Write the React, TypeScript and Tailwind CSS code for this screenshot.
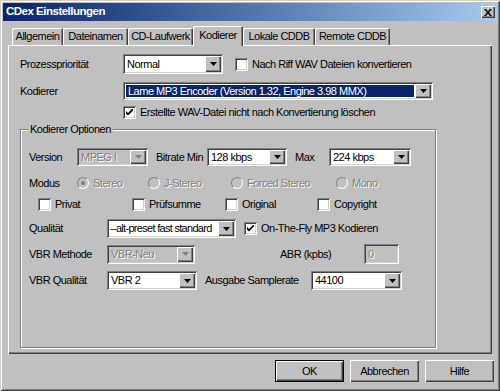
import type { ReactNode } from "react";

/**
 * CDex Einstellungen — Win2000-style settings dialog, "Kodierer" tab.
 */

const sunken =
  "shadow-[inset_1px_1px_0_#808080,inset_-1px_-1px_0_#fff,inset_2px_2px_0_#404040,inset_-2px_-2px_0_#d4d0c8]";
const raised =
  "shadow-[inset_1px_1px_0_#fff,inset_-1px_-1px_0_#404040,inset_-2px_-2px_0_#808080]";
const embossed = "text-[#808080] [text-shadow:1px_1px_0_#fff]";

function Arrow({ disabled }: { disabled?: boolean }) {
  return (
    <svg width="7" height="4" viewBox="0 0 7 4">
      <path d="M0 0h7L3.5 4z" fill={disabled ? "#808080" : "#000"} />
    </svg>
  );
}

function Combo({ value, w, h = 20, disabled, selected, tight }: { value: string; w: string; h?: number; disabled?: boolean; selected?: boolean; tight?: boolean }) {
  return (
    <div className={`${w} ${sunken} flex shrink-0 items-stretch p-[2px] ${disabled ? "bg-[#c0c0c0]" : "bg-white"}`} style={{ height: h }}>
      <div className={`flex min-w-0 flex-1 items-center ${selected ? "p-[1px]" : ""}`}>
        <span
          className={`flex h-full flex-1 items-center overflow-hidden whitespace-nowrap ${tight ? "pl-[1px] tracking-[-0.7px]" : "px-[2px]"} ${selected ? "bg-[#0a246a] text-white" : ""} ${disabled ? embossed : ""}`}
        >
          {value}
        </span>
      </div>
      <div className={`flex w-[16px] items-center justify-center bg-[#c0c0c0] ${raised}`}>
        <Arrow disabled={disabled} />
      </div>
    </div>
  );
}

function Check({ checked, label, className = "" }: { checked?: boolean; label: string; className?: string }) {
  return (
    <div className={`flex items-center ${className}`}>
      <span className={`flex h-[13px] w-[13px] shrink-0 items-center justify-center bg-white ${sunken}`}>
        {checked && (
          <svg width="7" height="7" viewBox="0 0 7 7">
            <path d="M0 2l2 2 5-5v2.5l-5 5-2-2z" fill="#000" />
          </svg>
        )}
      </span>
      <span className="ml-[4px] whitespace-nowrap">{label}</span>
    </div>
  );
}

function Radio({ checked, label, className = "" }: { checked?: boolean; label: string; className?: string }) {
  return (
    <div className={`flex items-center ${className}`}>
      <span className="flex h-[12px] w-[12px] shrink-0 items-center justify-center rounded-full border border-[#808080] border-r-white border-b-white bg-[#c0c0c0]">
        {checked && <span className="h-[4px] w-[4px] rounded-full bg-[#808080]" />}
      </span>
      <span className={`ml-[4px] whitespace-nowrap ${embossed}`}>{label}</span>
    </div>
  );
}

function Btn({ children, def }: { children: ReactNode; def?: boolean }) {
  return (
    <div className={`flex h-[22px] w-[69px] items-center justify-center bg-[#c0c0c0] ${def ? "border border-black" : ""} ${raised}`}>
      {children}
    </div>
  );
}

function Tab({ label, w, active }: { label: string; w: string; active?: boolean }) {
  return (
    <div
      className={`${w} flex items-center justify-center rounded-t-[2px] bg-[#c0c0c0] shadow-[inset_1px_1px_0_#fff,inset_-1px_0_0_#404040,inset_-2px_0_0_#808080] ${
        active ? "relative z-10 -mb-[1px] h-[20px] pb-[2px]" : "h-[17px]"
      }`}
    >
      {label}
    </div>
  );
}

export default function App() {
  return (
    <div
      className="flex h-[391px] w-[500px] flex-col bg-[#c0c0c0] p-[3px] text-[11px] leading-none text-black shadow-[inset_1px_1px_0_#d4d0c8,inset_-1px_-1px_0_#404040,inset_2px_2px_0_#fff,inset_-2px_-2px_0_#808080]"
      style={{ fontFamily: '"Liberation Sans", Arial, sans-serif', letterSpacing: "-0.5px" }}
    >
      {/* title bar */}
      <div className="flex h-[18px] shrink-0 items-center justify-between bg-gradient-to-r from-[#0a246a] to-[#a6caf0] pr-[2px] pl-[3px]">
        <span className="text-[11.5px] font-bold text-white">CDex Einstellungen</span>
        <div className={`flex h-[12px] w-[14px] items-center justify-center bg-[#c0c0c0] ${raised}`}>
          <svg width="8" height="7" viewBox="0 0 8 7">
            <path d="M0 0h2l2 2.5L6 0h2L5 3.5 8 7H6L4 4.5 2 7H0l3-3.5z" fill="#000" />
          </svg>
        </div>
      </div>

      {/* tabs */}
      <div className="mt-[5px] flex h-[19px] shrink-0 items-end pl-[9px]">
        <Tab label="Allgemein" w="w-[51px]" />
        <Tab label="Dateinamen" w="w-[65px]" />
        <Tab label="CD-Laufwerk" w="w-[65px]" />
        <Tab label="Kodierer" w="w-[50px]" active />
        <Tab label="Lokale CDDB" w="w-[72px]" />
        <Tab label="Remote CDDB" w="w-[75px]" />
      </div>

      {/* panel */}
      <div className="mx-[5px] flex h-[309px] shrink-0 flex-col px-[12px] pt-[9px] shadow-[inset_1px_1px_0_#fff,inset_-1px_-1px_0_#404040,inset_-2px_-2px_0_#808080]">
        <div className="flex h-[20px] items-center">
          <span className="w-[103px]">Prozesspriorität</span>
          <Combo value="Normal" w="w-[100px]" />
          <Check label="Nach Riff WAV Dateien konvertieren" className="ml-[12px]" />
        </div>
        <div className="mt-[8px] flex h-[18px] items-center">
          <span className="w-[103px]">Kodierer</span>
          <Combo value="Lame MP3 Encoder (Version 1.32, Engine 3.98 MMX)" w="w-[310px]" h={18} selected />
        </div>
        <Check checked label="Erstellte WAV-Datei nicht nach Konvertierung löschen" className="mt-[6px] ml-[103px] h-[13px]" />

        {/* group box */}
        <div className="relative mt-[10px] h-[219px] w-[416px] border border-[#808080] pt-[18px] pl-[8px] shadow-[1px_1px_0_#fff,inset_1px_1px_0_#fff]">
          <span className="absolute -top-[6px] left-[7px] bg-[#c0c0c0] px-[2px]">Kodierer Optionen</span>

          <div className="flex h-[18px] items-center">
            <span className="w-[48px]">Version</span>
            <Combo value="MPEG I" w="w-[71px]" h={18} disabled />
            <span className="ml-[8px] w-[51px]">Bitrate Min</span>
            <Combo value="128 kbps" w="w-[80px]" h={18} />
            <span className="ml-[8px] w-[34px]">Max</span>
            <Combo value="224 kbps" w="w-[82px]" h={18} />
          </div>

          <div className="mt-[9px] flex h-[16px] items-center">
            <span className="w-[48px]">Modus</span>
            <Radio checked label="Stereo" className="w-[71px]" />
            <Radio label="J-Stereo" className="w-[83px]" />
            <Radio label="Forced Stereo" className="w-[105px]" />
            <Radio label="Mono" />
          </div>

          <div className="mt-[6px] flex h-[14px] items-center pl-[9px]">
            <Check label="Privat" className="w-[94px]" />
            <Check label="Prüfsumme" className="w-[93px]" />
            <Check label="Original" className="w-[92px]" />
            <Check label="Copyright" />
          </div>

          <div className="mt-[8px] flex h-[19px] items-center">
            <span className="w-[78px]">Qualität</span>
            <Combo value="--alt-preset fast standard" w="w-[129px]" h={19} tight />
            <Check checked label="On-The-Fly MP3 Kodieren" className="ml-[8px]" />
          </div>

          <div className="mt-[6px] flex h-[20px] items-center">
            <span className="w-[78px]">VBR Methode</span>
            <Combo value="VBR-Neu" w="w-[88px]" h={19} disabled />
            <span className="ml-[85px] w-[84px]">ABR (kpbs)</span>
            <div className={`flex h-[20px] w-[35px] items-center bg-[#c0c0c0] px-[4px] ${sunken} ${embossed}`}>0</div>
          </div>

          <div className="mt-[7px] flex h-[19px] items-center">
            <span className="w-[78px]">VBR Qualität</span>
            <Combo value="VBR 2" w="w-[90px]" h={19} />
            <span className="ml-[8px] w-[106px]">Ausgabe Samplerate</span>
            <Combo value="44100" w="w-[91px]" h={19} />
          </div>
        </div>
      </div>

      {/* buttons */}
      <div className="mt-[6px] mr-[3px] flex justify-end gap-[6px]">
        <Btn def>OK</Btn>
        <Btn>Abbrechen</Btn>
        <Btn>Hilfe</Btn>
      </div>
    </div>
  );
}
